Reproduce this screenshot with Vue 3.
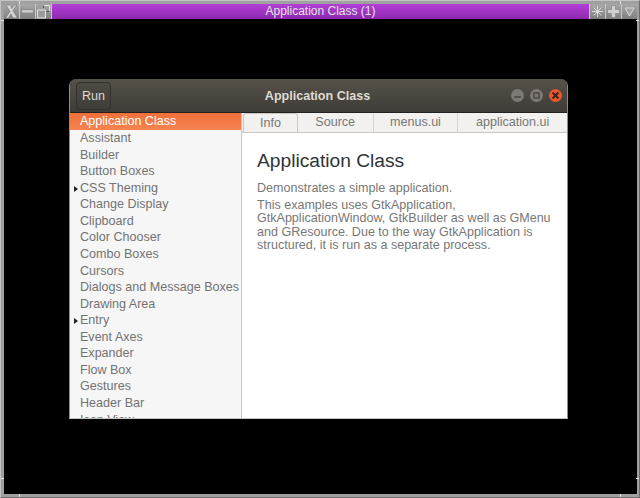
<script setup>
const demos = [
  { name: 'Application Class', selected: true },
  { name: 'Assistant' },
  { name: 'Builder' },
  { name: 'Button Boxes' },
  { name: 'CSS Theming', expandable: true },
  { name: 'Change Display' },
  { name: 'Clipboard' },
  { name: 'Color Chooser' },
  { name: 'Combo Boxes' },
  { name: 'Cursors' },
  { name: 'Dialogs and Message Boxes' },
  { name: 'Drawing Area' },
  { name: 'Entry', expandable: true },
  { name: 'Event Axes' },
  { name: 'Expander' },
  { name: 'Flow Box' },
  { name: 'Gestures' },
  { name: 'Header Bar' },
  { name: 'Icon View', expandable: true }
]

const tabs = [
  { label: 'Info', width: 55, active: true },
  { label: 'Source', width: 76 },
  { label: 'menus.ui', width: 85 },
  { label: 'application.ui', width: 109 }
]
</script>

<template>
  <div class="frame">
    <i class="notch top left"></i>
    <i class="notch top right"></i>
    <i class="notch bottom left"></i>
    <i class="notch bottom right"></i>
    <i class="notch side left"></i>
    <i class="notch side right"></i>
    <i class="notch side low left"></i>
    <i class="notch side low right"></i>
    <div class="wm-title">
      <div class="wm-btn"><svg width="15" height="15" viewBox="0 0 15 15"><path d="M2 1h4.500l1.500 3.500L10 1h3L9 6.500 13.500 14H9L7 10l-2.500 4H1.500L6 7.500z" fill="#d4d4d4" stroke="#707070" stroke-width=".6"/></svg></div>
      <div class="wm-btn"><svg width="15" height="15" viewBox="0 0 15 15"><rect x="1.500" y="5.500" width="12" height="3.500" fill="#c8c8c8" stroke="#787878" stroke-width=".6"/></svg></div>
      <div class="wm-btn"><svg width="15" height="15" viewBox="0 0 15 15"><path d="M7.500 1.500h6v6" fill="none" stroke="#e0e0e0"/><path d="M7.500 4V1.500M13.500 7.500H10" stroke="#555" fill="none"/><path d="M1.500 6h8v8h-8z" fill="#9c9c9c" stroke="#e4e4e4"/></svg></div>
      <div class="wm-name">Application Class (1)</div>
      <div class="wm-btn"><svg width="15" height="15" viewBox="0 0 15 15"><path d="M7.500 2v11M2 7.500h11M3.500 3.500l8 8M11.500 3.500l-8 8" stroke="#ddd" fill="none"/></svg></div>
      <div class="wm-btn"><svg width="15" height="15" viewBox="0 0 15 15"><path d="M5.500 1.500h4v4h4v4h-4v4h-4v-4h-4v-4h4z" fill="#d0d0d0" stroke="#808080" stroke-width=".6"/></svg></div>
      <div class="wm-btn"><svg width="15" height="15" viewBox="0 0 15 15"><path d="M3 4h9l-4.500 8z" fill="#a4a4a4" stroke="#d8d8d8"/></svg></div>
    </div>
    <div class="desk">
      <div class="window">
        <div class="header">
          <button class="run">Run</button>
          <div class="title">Application Class</div>
          <div class="controls">
            <span class="ctl"><i class="dash"></i></span>
            <span class="ctl"><i class="square"></i></span>
            <span class="ctl red"><svg width="9" height="9" viewBox="0 0 9 9"><path d="M1.500 1.500l6 6M7.500 1.500l-6 6" stroke="#3a2018" stroke-width="1.800"/></svg></span>
          </div>
        </div>
        <div class="body">
          <div class="sidebar">
            <div v-for="d in demos" :key="d.name" class="row" :class="{ selected: d.selected }">
              <span v-if="d.expandable" class="arrow"></span>{{ d.name }}
            </div>
          </div>
          <div class="main">
            <div class="tabs">
              <div v-for="t in tabs" :key="t.label" class="tab" :class="{ active: t.active }" :style="{ width: t.width + 'px' }">{{ t.label }}</div>
            </div>
            <div class="info">
              <h1>Application Class</h1>
              <p class="lead">Demonstrates a simple application.</p>
              <p>This examples uses GtkApplication,<br>GtkApplicationWindow, GtkBuilder as well as GMenu<br>and GResource. Due to the way GtkApplication is<br>structured, it is run as a separate process.</p>
            </div>
          </div>
        </div>
      </div>
    </div>
  </div>
</template>

<style>
html, body { margin: 0; background: #000; }
</style>

<style scoped>
* { box-sizing: border-box; }
.frame {
  width: 640px;
  height: 498px;
  display: flex;
  flex-direction: column;
  position: relative;
  background: #a0a0a0;
  border: 1px solid #c4c4c4;
  border-right-color: #6c6c6c;
  border-bottom-color: #6c6c6c;
  padding: 3px 2px 3px 3px;
  font-family: "Liberation Sans", Arial, sans-serif;
  overflow: hidden;
}
.notch {
  position: absolute;
  background: #e4e4e4;
  z-index: 1;
}
.notch.top, .notch.bottom { width: 1px; height: 3px; }
.notch.top { top: 0; }
.notch.bottom { bottom: 0; }
.notch.top.left, .notch.bottom.left { left: 18px; }
.notch.top.right, .notch.bottom.right { right: 18px; }
.notch.side { width: 3px; height: 1px; top: 19px; }
.notch.side.low { top: 477px; }
.notch.side.left { left: 0; }
.notch.side.right { right: 0; }
.wm-title {
  height: 15px;
  display: flex;
  flex: none;
  gap: 1px;
  background: #c8c8c8;
}
.wm-btn {
  width: 15px;
  height: 15px;
  background: linear-gradient(#a8a8a8, #808080);
  display: flex;
}
.wm-name {
  flex: 1;
  background: linear-gradient(#b23fd8, #8e28ae);
  color: #e4e4e4;
  font-size: 12px;
  line-height: 15px;
  text-align: center;
}
.desk {
  flex: 1;
  background: #000;
  display: flex;
  padding: 60px 69px 75px 65px;
}
.window {
  flex: 1;
  display: flex;
  flex-direction: column;
  border-radius: 7px 7px 0 0;
  overflow: hidden;
  border: 1px solid #3a3833;
  border-top: 0;
  border-bottom-color: #c8c4c0;
  border-left-color: #8f8c86;
  border-right-color: #8f8c86;
  height: 340px;
}
.header {
  height: 34px;
  flex: none;
  background: linear-gradient(#56524a, #3e3c37);
  border-bottom: 1px solid #222;
  display: flex;
  align-items: center;
  position: relative;
  padding: 0 5px 0 6px;
  justify-content: space-between;
}
.run {
  width: 35px;
  height: 28px;
  padding: 0;
  background: linear-gradient(#4d4a43, #3f3d38);
  border: 1px solid #33312d;
  border-radius: 4px;
  color: #dfdbd2;
  font: 12.550px "Liberation Sans", Arial, sans-serif;
}
.title {
  position: absolute;
  left: 0;
  right: 2px;
  text-align: center;
  color: #dfdbd2;
  font-size: 12.550px;
  font-weight: bold;
}
.controls {
  display: flex;
  gap: 6px;
  align-items: center;
}
.ctl {
  width: 13px;
  height: 13px;
  border-radius: 50%;
  background: #7c7a74;
  display: flex;
  align-items: center;
  justify-content: center;
}
.ctl.red { background: #e8582a; }
.dash { width: 7px; height: 2px; background: #55534e; margin-top: 3px; }
.square { width: 7px; height: 7px; border: 2px solid #55534e; }
.body {
  flex: 1;
  display: flex;
  min-height: 0;
  background: #fff;
}
.sidebar {
  width: 172px;
  flex: none;
  background: #f6f6f6;
  border-right: 1px solid #cdc7c2;
  overflow: hidden;
  color: #737373;
  font-size: 12.550px;
}
.row {
  height: 16.570px;
  line-height: 16.570px;
  padding-left: 10px;
  position: relative;
  white-space: nowrap;
  top: .45px;
}
.row.selected {
  background: linear-gradient(#f0703a, #f58450);
  color: #fff;
}
.arrow {
  position: absolute;
  left: 4px;
  top: 6px;
  border-left: 4px solid #222;
  border-top: 3px solid transparent;
  border-bottom: 3px solid transparent;
}
.main {
  flex: 1;
  min-width: 0;
  display: flex;
  flex-direction: column;
}
.tabs {
  height: 20px;
  flex: none;
  display: flex;
  background: #f2f1f0;
  border-bottom: 1px solid #cdc7c2;
}
.tab {
  text-align: center;
  font-size: 12.550px;
  line-height: 19px;
  color: #777;
  border-right: 1px solid #d8d4d0;
}
.tab:last-child { border-right: 0; }
.tab.active {
  border-left: 1px solid #cdc7c2;
  border-right: 1px solid #cdc7c2;
  border-top: 1px solid #cdc7c2;
  border-radius: 3px 3px 0 0;
  height: 20px;
  margin-left: 1px;
  line-height: 18px;
}
.info {
  padding: 17px 15px;
  color: #777;
  font-size: 12.550px;
  line-height: 13.500px;
}
h1 {
  margin: 0 0 10px;
  font-size: 19.200px;
  font-weight: normal;
  line-height: 22px;
  color: #2e3436;
}
p { margin: 0 0 3px; }
</style>
